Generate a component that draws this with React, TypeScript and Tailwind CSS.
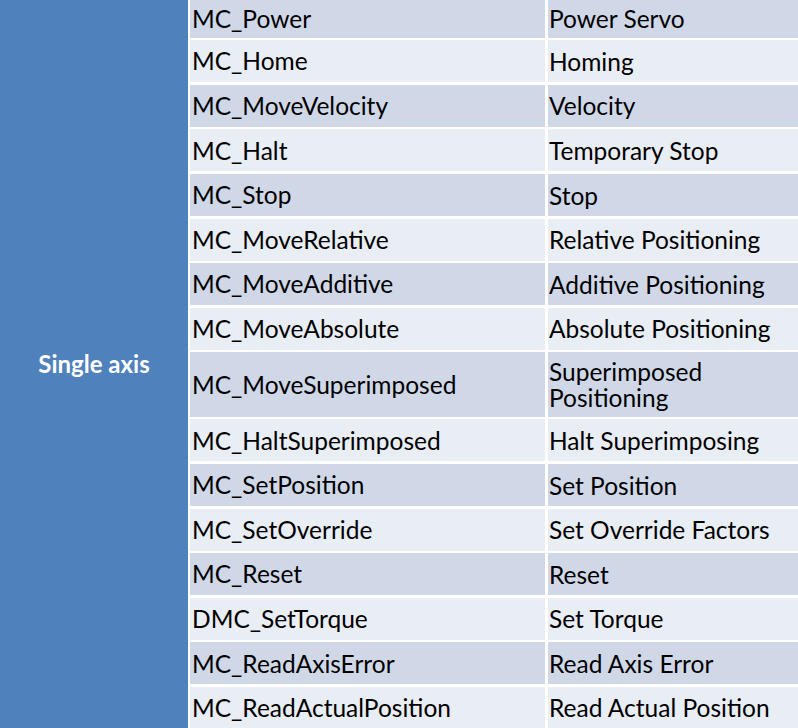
import React from 'react';

const rows: [string, string, string][] = [
  ['MC_Power', 'Power Servo', 'h-[37.7px]'],
  ['MC_Home', 'Homing', 'h-[42px]'],
  ['MC_MoveVelocity', 'Velocity', 'h-[42px]'],
  ['MC_Halt', 'Temporary Stop', 'h-[42px]'],
  ['MC_Stop', 'Stop', 'h-[42px]'],
  ['MC_MoveRelative', 'Relative Positioning', 'h-[42px]'],
  ['MC_MoveAdditive', 'Additive Positioning', 'h-[42px]'],
  ['MC_MoveAbsolute', 'Absolute Positioning', 'h-[42px]'],
  ['MC_MoveSuperimposed', 'Superimposed Positioning', 'h-[64.4px]'],
  ['MC_HaltSuperimposed', 'Halt Superimposing', 'h-[42px]'],
  ['MC_SetPosition', 'Set Position', 'h-[42px]'],
  ['MC_SetOverride', 'Set Override Factors', 'h-[42px]'],
  ['MC_Reset', 'Reset', 'h-[42px]'],
  ['DMC_SetTorque', 'Set Torque', 'h-[42px]'],
  ['MC_ReadAxisError', 'Read Axis Error', 'h-[42px]'],
  ['MC_ReadActualPosition', 'Read Actual Position', 'h-[42px]'],
];

const App = () => {
  return (
    <div className="flex h-[728px] w-[798px] overflow-hidden bg-white font-['Lato',sans-serif] text-black">
      {/* merged group cell */}
      <div className="mr-[2px] flex w-[188px] shrink-0 items-center justify-center bg-[#4f81bd]">
        <span className="text-[24px] font-bold text-white">Single axis</span>
      </div>

      <div className="flex flex-col gap-y-[2.6px]">
        {rows.map(([fn, desc, h], i) => {
          const bg = i % 2 === 0 ? 'bg-[#d0d8e8]' : 'bg-[#e9edf4]';
          return (
            <div key={fn} className={`flex shrink-0 gap-x-[3px] ${h}`}>
              <div className={`flex w-[355px] items-center pt-[1px] pl-[2px] text-[24.5px] ${bg}`}>{fn}</div>
              <div className={`flex w-[250px] items-center pt-[1px] pl-[1px] pr-2 text-[24.5px] leading-[26px] ${bg}`}>{desc}</div>
            </div>
          );
        })}
      </div>
    </div>
  );
};

export default App;
